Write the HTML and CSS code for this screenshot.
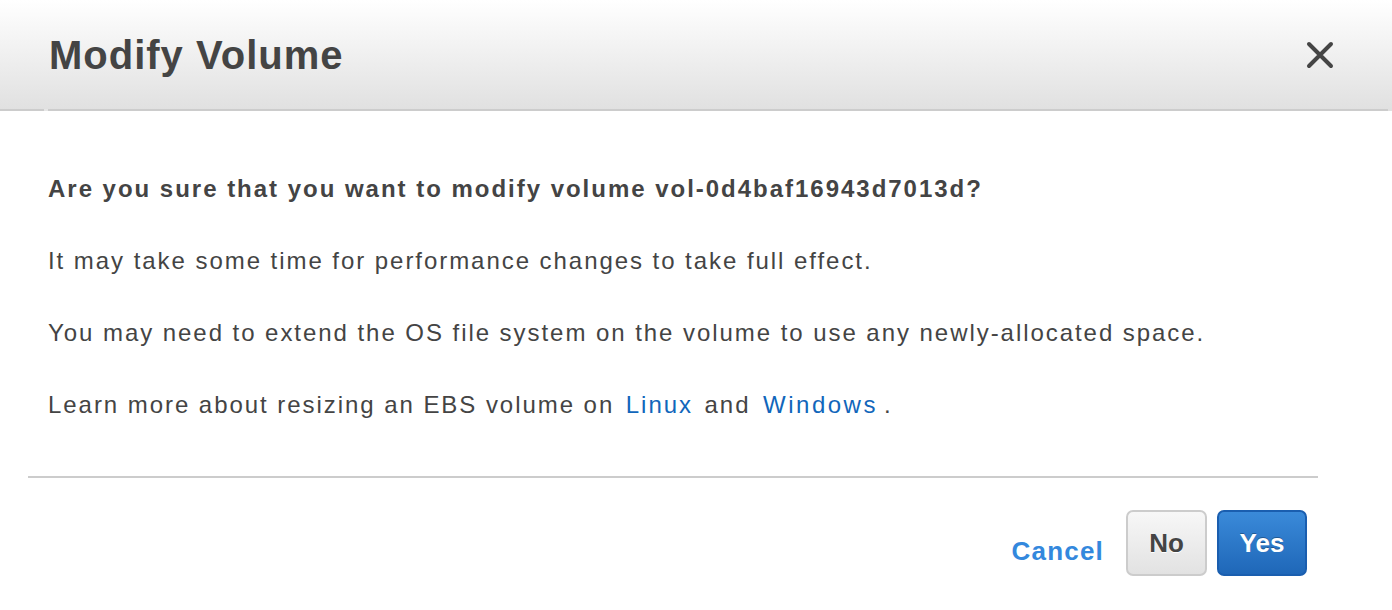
FILE: index.html
```html
<!DOCTYPE html>
<html>
<head>
<meta charset="utf-8">
<link rel="stylesheet" href="styles.css">
</head>
<body>
<div class="dialog">
  <div class="header">
    <h1 class="title">Modify Volume</h1>
    <button class="close" aria-label="Close">
      <svg width="28" height="28" viewBox="0 0 28 28"><path d="M3 3L25 25M25 3L3 25" stroke="#444" stroke-width="4" stroke-linecap="round"/></svg>
    </button>
  </div>
  <div class="body">
    <p class="question">Are you sure that you want to modify volume vol-0d4baf16943d7013d?</p>
    <p>It may take some time for performance changes to take full effect.</p>
    <p>You may need to extend the OS file system on the volume to use any newly-allocated space.</p>
    <p>Learn more about resizing an EBS volume on <a href="#">Linux</a> and <a class="win" href="#">Windows</a>.</p>
  </div>
  <div class="footer">
    <a class="cancel" href="#">Cancel</a>
    <button class="btn btn-no">No</button>
    <button class="btn btn-yes">Yes</button>
  </div>
</div>
</body>
</html>
```
FILE: styles.css
```css
html, body { margin: 0; padding: 0; background: #fff; }
body { font-family: "Liberation Sans", Arial, Helvetica, sans-serif; color: #444; }
.dialog { width: 1392px; }
.header {
  position: relative;
  height: 111px;
  background: linear-gradient(#ffffff, #e0e0e0);
  display: flex;
  align-items: center;
  justify-content: space-between;
  padding: 0 58px 2px 49px;
  box-sizing: border-box;
}
.header::after {
  content: "";
  position: absolute;
  left: 0; bottom: 0;
  width: 1388px; height: 2px;
  background: linear-gradient(to right, #cccccc 0, #cccccc 44px, #e6e6e6 44px, #e6e6e6 48px, #cccccc 48px);
}
.title {
  margin: 0;
  font-size: 40px;
  font-weight: bold;
  color: #444;
  letter-spacing: 1px;
  position: relative;
  top: 1px;
}
.close { border: 0; background: none; padding: 0; width: 28px; height: 28px; display: block; }
.close svg { display: block; }
.body { padding: 64px 48px 58px; }
.body p { margin: 0 0 45px; font-size: 24px; line-height: 27px; letter-spacing: 1.95px; }
.body p:last-child { margin-bottom: 0; }
.body p.question { font-weight: bold; letter-spacing: 1.98px; }
.body a { color: #1166bb; text-decoration: none; margin: 0 3px; }
.body a.win { margin: 0 6px 0 4px; letter-spacing: 2.5px; }
.footer {
  margin: 0 74px 0 28px;
  border-top: 2px solid #cccccc;
  display: flex;
  justify-content: flex-end;
  align-items: center;
  padding: 32px 11px 0 0;
}
.cancel { color: #3388dd; font-weight: bold; font-size: 26px; letter-spacing: 1.2px; text-decoration: none; margin-right: 22px; position: relative; top: 8px; }
.btn {
  font-family: "Liberation Sans", Arial, sans-serif;
  font-weight: bold;
  font-size: 26px;
  height: 66px;
  border-radius: 7px;
  padding: 0;
  box-sizing: border-box;
}
.btn-no {
  width: 81px;
  background: linear-gradient(#f7f7f7, #e2e2e2);
  border: 2px solid #cccccc;
  color: #444;
  text-shadow: 0 1px 0 #fff;
  margin-right: 10px;
}
.btn-yes {
  width: 90px;
  background: linear-gradient(#3a8ad9, #1f67b8);
  border: 2px solid #1a5eaf;
  color: #fff;
  text-shadow: 0 -1px 0 rgba(0,0,0,0.3);
}
```
